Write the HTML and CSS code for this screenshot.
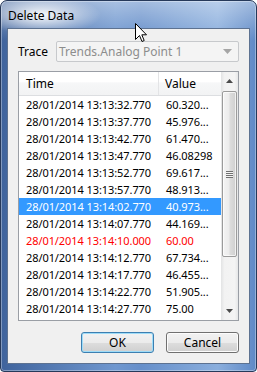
FILE: index.html
```html
<!doctype html>
<html lang="en">

<head>
    <meta charset="UTF-8" />
    <title>Delete Data</title>
    <link rel="stylesheet" href="styles.css">
</head>

<body>
    <div class="window">
        <div class="titlebar">
            <span class="title">Delete Data</span>
        </div>

        <div class="client">
            <div class="trace-row">
                <label class="trace-label">Trace</label>
                <div class="combo">
                    <span class="combo-text">Trends.Analog Point 1</span>
                    <svg class="combo-arrow" width="9" height="5" viewBox="0 0 9 5">
                        <path d="M0 0h9L4.5 5z" fill="#a5a5a5" />
                    </svg>
                </div>
            </div>

            <div class="listview">
                <div class="list-body">
                    <div class="list-header">
                        <div class="col col-time">Time</div>
                        <div class="col col-value">Value</div>
                    </div>
                    <div class="row"><div class="col col-time">28/01/2014 13:13:32.770</div><div class="col col-value">60.320...</div></div>
                    <div class="row"><div class="col col-time">28/01/2014 13:13:37.770</div><div class="col col-value">45.976...</div></div>
                    <div class="row"><div class="col col-time">28/01/2014 13:13:42.770</div><div class="col col-value">61.470...</div></div>
                    <div class="row"><div class="col col-time">28/01/2014 13:13:47.770</div><div class="col col-value">46.08298</div></div>
                    <div class="row"><div class="col col-time">28/01/2014 13:13:52.770</div><div class="col col-value">69.617...</div></div>
                    <div class="row"><div class="col col-time">28/01/2014 13:13:57.770</div><div class="col col-value">48.913...</div></div>
                    <div class="row selected"><div class="col col-time">28/01/2014 13:14:02.770</div><div class="col col-value">40.973...</div></div>
                    <div class="row"><div class="col col-time">28/01/2014 13:14:07.770</div><div class="col col-value">44.169...</div></div>
                    <div class="row manual"><div class="col col-time">28/01/2014 13:14:10.000</div><div class="col col-value">60.00</div></div>
                    <div class="row"><div class="col col-time">28/01/2014 13:14:12.770</div><div class="col col-value">67.734...</div></div>
                    <div class="row"><div class="col col-time">28/01/2014 13:14:17.770</div><div class="col col-value">46.455...</div></div>
                    <div class="row"><div class="col col-time">28/01/2014 13:14:22.770</div><div class="col col-value">51.905...</div></div>
                    <div class="row"><div class="col col-time">28/01/2014 13:14:27.770</div><div class="col col-value">75.00</div></div>
                </div>

                <div class="scrollbar">
                    <div class="scroll-btn">
                        <svg width="7" height="4" viewBox="0 0 7 4"><path d="M3.5 0L7 4H0z" fill="#4a4a4a" /></svg>
                    </div>
                    <div class="scroll-track">
                        <div class="scroll-thumb">
                            <div class="grip"></div>
                        </div>
                    </div>
                    <div class="scroll-btn">
                        <svg width="7" height="4" viewBox="0 0 7 4"><path d="M0 0h7L3.5 4z" fill="#4a4a4a" /></svg>
                    </div>
                </div>
            </div>

            <div class="buttons">
                <button class="btn btn-default" type="button">OK</button>
                <button class="btn" type="button">Cancel</button>
            </div>
        </div>

        <svg class="cursor" width="12" height="19" viewBox="0 0 12 19">
            <path d="M0.5 0.5V16.5L4.5 12.5L7 18.5L9.2 17.5L6.8 11.8H11.5Z" fill="#fff" stroke="#000" stroke-width="1" stroke-linejoin="miter" />
        </svg>
    </div>
</body>

</html>
```

FILE: styles.css
```css
* {
    margin: 0;
    padding: 0;
    box-sizing: border-box;
}

body {
    background-color: #ffffff;
    font-family: "Noto Sans", "Segoe UI", sans-serif;
    font-size: 11px;
    color: #000000;
}

.window {
    position: relative;
    width: 257px;
    height: 372px;
    border: 1px solid #26395a;
    border-radius: 7px 7px 4px 4px;
    padding: 0 6px 7px 6px;
    display: flex;
    flex-direction: column;
    background:
        radial-gradient(ellipse 60px 20px at 40px 14px, rgba(255, 255, 255, 0.95), rgba(255, 255, 255, 0)),
        linear-gradient(180deg, rgba(255, 255, 255, 0.4), rgba(255, 255, 255, 0) 40px),
        linear-gradient(90deg, #3f639c 0%, #6f97cf 45%, #668fca 55%, #8aaedd 85%, #5f89c6 100%);
    box-shadow: inset 0 0 0 1px rgba(255, 255, 255, 0.35);
}

.titlebar {
    height: 27px;
    display: flex;
    align-items: center;
    padding-left: 1px;
    padding-top: 2px;
}

.title {
    font-size: 12px;
    color: #000000;
}

.client {
    flex: 1;
    background-color: #f0f0f0;
    border: 1px solid #5d7291;
    display: flex;
    flex-direction: column;
    padding: 12px 10px 9px 10px;
}

.trace-row {
    display: flex;
    align-items: center;
    height: 21px;
}

.trace-label {
    width: 38px;
    font-size: 12px;
}

.combo {
    flex: 1;
    height: 21px;
    border: 1px solid #c7c9cc;
    border-radius: 2px;
    background-color: #f4f4f4;
    display: flex;
    align-items: center;
    justify-content: space-between;
    padding: 0 6px 0 2px;
}

.combo-text {
    color: #8d8d8d;
    font-size: 12px;
}

.listview {
    margin-top: 9px;
    height: 250px;
    border: 1px solid #9a9ea5;
    background-color: #ffffff;
    display: flex;
}

.list-body {
    flex: 1;
    overflow: hidden;
}

.list-header {
    display: flex;
    height: 24px;
    align-items: center;
    background: linear-gradient(180deg, #ffffff 0%, #ffffff 45%, #f6f7f8 46%, #f2f3f4 100%);
    border-bottom: 1px solid #dcdee1;
}

.list-header .col {
    height: 100%;
    display: flex;
    align-items: center;
    font-size: 12px;
}

.list-header .col-time {
    border-right: 1px solid #e3e4e6;
}

.col-time {
    width: 140px;
    padding-left: 7px;
}

.col-value {
    padding-left: 6px;
    flex: 1;
    white-space: nowrap;
}

.row {
    display: flex;
    height: 17px;
    line-height: 17px;
    white-space: nowrap;
    letter-spacing: -0.08px;
}

.row .col-value {
    padding-left: 7px;
}

.row.selected {
    background-color: #3399ff;
    color: #ffffff;
}

.row.manual {
    color: #ff0000;
}

.scrollbar {
    width: 17px;
    display: flex;
    flex-direction: column;
    background: linear-gradient(90deg, #e2e3e4 0%, #f2f2f2 20%, #f4f4f4 80%, #e6e7e8 100%);
}

.scroll-btn {
    height: 18px;
    display: flex;
    align-items: center;
    justify-content: center;
}

.scroll-track {
    flex: 1;
    padding: 1px 1px 0 1px;
}

.scroll-thumb {
    height: 166px;
    border: 1px solid #9b9b9b;
    border-radius: 2px;
    background: linear-gradient(90deg, #f4f4f4 0%, #ececec 45%, #dcdcdc 55%, #cfcfcf 100%);
    box-shadow: inset 0 0 0 1px rgba(255, 255, 255, 0.7);
    display: flex;
    align-items: center;
    justify-content: center;
}

.grip {
    width: 7px;
    height: 7px;
    background: repeating-linear-gradient(180deg, #707070 0px, #707070 1px, #f4f4f4 1px, #f4f4f4 2px);
}

.buttons {
    margin-top: 11px;
    display: flex;
    justify-content: flex-end;
    gap: 12px;
}

.btn {
    width: 73px;
    height: 21px;
    border: 1px solid #707070;
    border-radius: 3px;
    font-family: "Noto Sans", "Segoe UI", sans-serif;
    font-size: 12px;
    color: #000000;
    background: linear-gradient(180deg, #f2f2f2 0%, #ebebeb 50%, #dddddd 51%, #cfcfcf 100%);
    box-shadow: inset 0 0 0 1px #fcfcfc;
}

.btn-default {
    border-color: #3c7fb1;
    box-shadow: inset 0 0 0 1px #9edcf8;
}

.cursor {
    position: absolute;
    left: 134px;
    top: 22px;
}
```
